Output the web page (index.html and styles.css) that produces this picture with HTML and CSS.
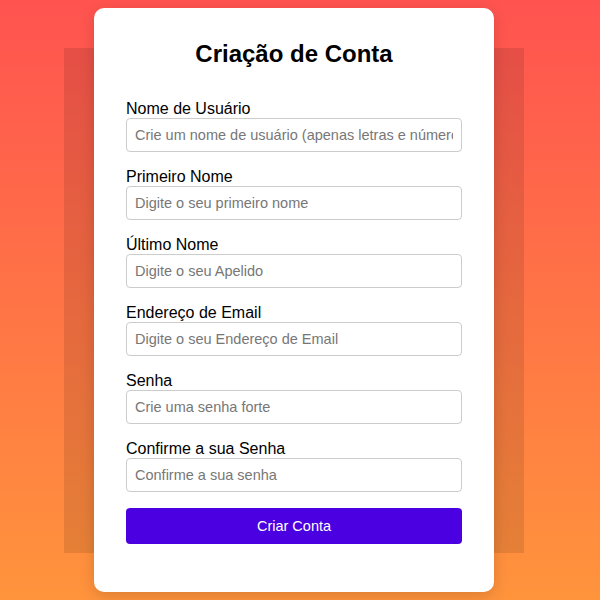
FILE: index.html
```html
<!DOCTYPE html>
<html lang="pt">
<head>
<meta charset="UTF-8">
<meta name="viewport" content="width=device-width,initial-scale=1.0">
<title>Criação de Conta</title>
<link rel="stylesheet" href="styles.css">
</head>
<body>
<!-- ===== cartão de registo ===== -->
<div class="stage">
  <div class="backdrop"></div>
  <form class="card">
    <h2>Criação de Conta</h2>

    <div class="field">
      <label for="user">Nome de Usuário</label>
      <input type="text" id="user" placeholder="Crie um nome de usuário (apenas letras e números)">
    </div>
    <div class="field">
      <label for="first">Primeiro Nome</label>
      <input type="text" id="first" placeholder="Digite o seu primeiro nome">
    </div>
    <div class="field">
      <label for="last">Último Nome</label>
      <input type="text" id="last" placeholder="Digite o seu Apelido">
    </div>
    <div class="field">
      <label for="email">Endereço de Email</label>
      <input type="email" id="email" placeholder="Digite o seu Endereço de Email">
    </div>
    <div class="field">
      <label for="pass">Senha</label>
      <input type="password" id="pass" placeholder="Crie uma senha forte">
    </div>
    <div class="field">
      <label for="pass2">Confirme a sua Senha</label>
      <input type="password" id="pass2" placeholder="Confirme a sua senha">
    </div>

    <button type="button" class="btn">Criar Conta</button>
  </form>
</div>
</body>
</html>
```

FILE: styles.css
```css
/* ==== geral ==== */
*{box-sizing:border-box;margin:0;padding:0}
body{
  font-family:"Liberation Sans", Arial, sans-serif;
  height:100vh;
  overflow:hidden;
  padding-right:12px;
  background:linear-gradient(to bottom,#ff5350,#ff943c);
  display:grid;
  place-items:center;
}

/* ==== palco: fundo escuro + cartão sobrepostos ==== */
.stage{display:grid;place-items:center}
.backdrop,.card{grid-area:1/1}
.backdrop{
  width:460px;height:505px;
  background:rgba(0,0,0,.1);
}
.card{
  position:relative;
  width:400px;
  background:#fff;
  border-radius:10px;
  padding:32px 32px 48px;
  box-shadow:0 4px 15px rgba(0,0,0,.15);
}
h2{
  font-size:24px;line-height:28px;
  text-align:center;color:#000;
  margin-bottom:32px;
}

/* ==== campos ==== */
.field{display:flex;flex-direction:column;margin-bottom:16px}
label{font-size:16px;line-height:18px;color:#000}
input{
  height:34px;
  padding:0 8px;
  border:1px solid #ccc;
  border-radius:4px;
  font-family:inherit;
  font-size:14.5px;
  color:#333;
}
input::placeholder{color:#777}

.btn{
  display:block;width:100%;height:36px;
  border:none;border-radius:4px;
  background:#4a00e0;color:#fff;
  font-family:inherit;font-size:14.5px;
  cursor:pointer;
}
```
